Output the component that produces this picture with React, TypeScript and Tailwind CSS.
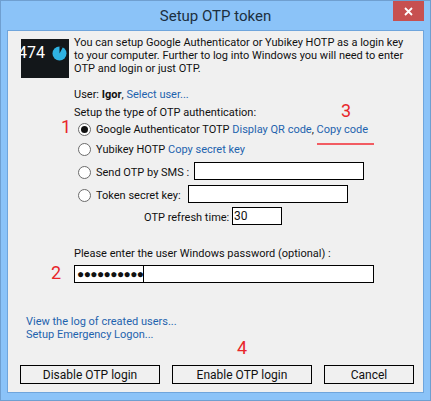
// App.tsx - Setup OTP token dialog

import React from 'react';

const RadioDot = ({ checked = false }: { checked?: boolean }) => (
  <span className="mr-[5px] flex h-[13px] w-[13px] shrink-0 items-center justify-center rounded-full border border-[#6b6b6b] bg-white">
    {checked && <span className="h-[7px] w-[7px] rounded-full bg-[#111111]" />}
  </span>
);

const Link = ({ children }: { children: React.ReactNode }) => (
  <span className="text-[#1e63ae]">{children}</span>
);

const DialogButton = ({ label, width }: { label: string; width: string }) => (
  <button className={`h-[19px] ${width} border border-black bg-[#f0f0f0] text-[12px] leading-[16px] text-[#111111]`}>
    {label}
  </button>
);

export default function App() {
  return (
    <div className="relative flex h-[401px] w-[431px] flex-col whitespace-nowrap border border-[#6f9fd0] bg-[#8bc3f8] font-['Roboto','Noto_Sans',sans-serif] text-[11px] leading-[13px] text-[#111111]">
      {/* title bar */}
      <div className="relative flex h-[29px] shrink-0 items-center justify-center text-[15px] text-[#1c2f40]">
        <span className="mt-[2px]">Setup OTP token</span>
        <div className="absolute right-[6px] top-0 flex h-[20px] w-[31px] items-center justify-center bg-[#c75050]">
          <svg width="9" height="9" viewBox="0 0 9 9">
            <path d="M1 1 L8 8 M8 1 L1 8" stroke="#ffffff" strokeWidth="1.8" fill="none" />
          </svg>
        </div>
      </div>

      {/* client area */}
      <div className="relative mx-[6px] flex h-[363px] flex-col border border-[#6fa5dc] bg-[#f0f0f0]">
        <div className="flex pl-[13px] pt-[5px]">
          <div className="mt-[3px] flex h-[39px] w-[48px] shrink-0 items-start overflow-hidden bg-[#13171a] pt-[6px] text-white">
            <span className="-ml-[3px] w-[34px] shrink-0 text-[16px] leading-[16px]">474</span>
            <svg className="mt-[1px] shrink-0" width="15" height="15" viewBox="0 0 15 15">
              <circle cx="7.5" cy="7.5" r="7" fill="#2fb3e3" />
              <path d="M7.5 7.5 L7.5 0 L11 1 Z" fill="#13171a" />
            </svg>
          </div>
          <div className="ml-[5px] w-[340px]">
            You can setup Google Authenticator or Yubikey HOTP as a login key
            <br />
            to your computer. Further to log into Windows you will need to enter
            <br />
            OTP and login or just OTP.
          </div>
        </div>

        <div className="flex flex-col pl-[66px]">
          <div className="mt-[10px] h-[14px]">
            User: <b>Igor</b>, <Link>Select user...</Link>
          </div>
          <div className="mt-[4px] h-[14px]">Setup the type of OTP authentication:</div>

          <div className="ml-[4px] mt-[2px] flex h-[15px] items-center">
            <RadioDot checked />
            <span>
              Google Authenticator TOTP <Link>Display QR code</Link>, <Link>Copy code</Link>
            </span>
          </div>
          <div className="ml-[4px] mt-[5px] flex h-[15px] items-center">
            <RadioDot />
            <span>
              Yubikey HOTP <Link>Copy secret key</Link>
            </span>
          </div>
          <div className="ml-[4px] mt-[5px] flex h-[17px] items-center">
            <div className="flex items-center pt-[3px]">
              <RadioDot />
              <span className="w-[98px] shrink-0">Send OTP by SMS :</span>
            </div>
            <div className="h-[18px] w-[170px] shrink-0 border border-black bg-white" />
          </div>
          <div className="ml-[4px] mt-[6px] flex h-[17px] items-center">
            <div className="flex items-center pt-[3px]">
              <RadioDot />
              <span className="w-[92px] shrink-0">Token secret key:</span>
            </div>
            <div className="h-[18px] w-[160px] shrink-0 border border-black bg-white" />
          </div>
          <div className="ml-[70px] mt-[5px] flex h-[18px] items-center">
            <span className="w-[88px] shrink-0 pt-[2px]">OTP refresh time:</span>
            <div className="h-[18px] w-[50px] shrink-0 border border-black bg-white pl-[1px] text-[12px] leading-[16px]">30</div>
          </div>

          <div className="mt-[22px] h-[14px]">Please enter the user Windows password (optional) :</div>
          <div className="mt-[4px] flex h-[18px] w-[300px] items-center border border-black bg-white pl-[2px]">
            <span className="border-r border-black text-[12px] font-bold leading-[16px] tracking-[-0.6px]">
              ●●●●●●●●●●
            </span>
          </div>
        </div>

        <div className="mt-[32px] pl-[18px] text-[#1e63ae]">
          <div>View the log of created users...</div>
          <div>Setup Emergency Logon...</div>
        </div>

        <div className="mt-[24px] flex gap-[12px] pl-[12px]">
          <DialogButton label="Disable OTP login" width="w-[140px]" />
          <DialogButton label="Enable OTP login" width="w-[140px]" />
          <DialogButton label="Cancel" width="w-[90px]" />
        </div>
      </div>

      {/* hand-drawn annotations on top of the screenshot */}
      <span className="absolute left-[60px] top-[116px] text-[18px] leading-[20px] text-[#e8262a]">1</span>
      <span className="absolute left-[50px] top-[262px] text-[18px] leading-[20px] text-[#e8262a]">2</span>
      <span className="absolute left-[340px] top-[100px] text-[18px] leading-[20px] text-[#e8262a]">3</span>
      <span className="absolute left-[236px] top-[337px] text-[18px] leading-[20px] text-[#e8262a]">4</span>
      <div className="absolute left-[316px] top-[142px] h-[2px] w-[57px] bg-[#f25c62]" />
    </div>
  );
}
